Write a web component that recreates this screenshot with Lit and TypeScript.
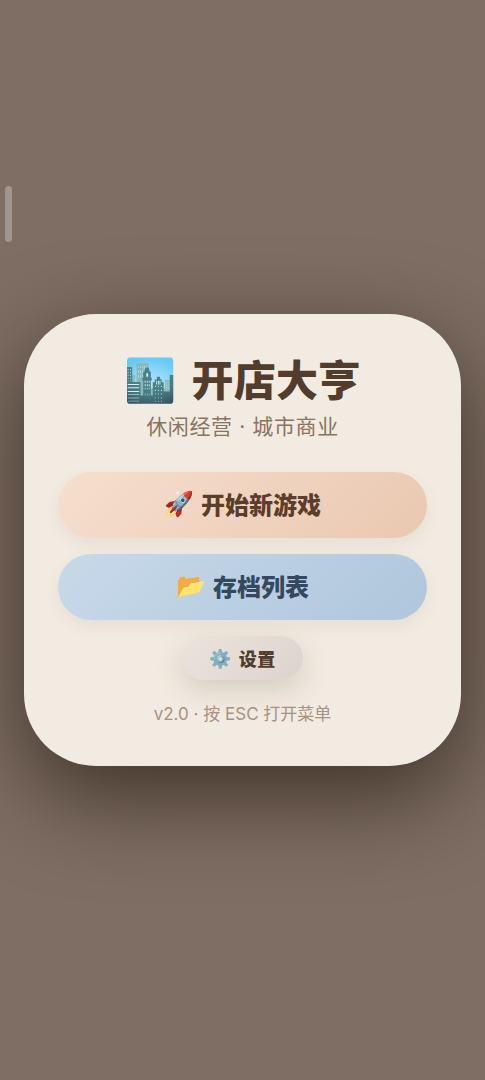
import { LitElement, html, css } from "lit";
import { customElement } from "lit/decorators.js";

@customElement("app-root")
export class AppRoot extends LitElement {
  static styles = css`
    :host {
      display: block;
      width: 485px;
      height: 1080px;
      font-family: Inter, "Noto Sans CJK SC", sans-serif;
    }
    .page {
      position: relative;
      width: 485px;
      height: 1080px;
      background: #7e6e63;
      display: flex;
      align-items: flex-start;
      justify-content: center;
      padding-top: 314px;
      box-sizing: border-box;
      overflow: hidden;
    }
    .scroll {
      position: absolute;
      left: 5px;
      top: 186px;
      width: 7px;
      height: 56px;
      border-radius: 4px;
      background: #a0968f;
    }
    .card {
      width: 437px;
      height: 452px;
      box-sizing: border-box;
      border-radius: 72px;
      background: #f2ebe1;
      box-shadow: 0 30px 90px rgba(35, 22, 12, 0.68);
      padding: 41px 34px 0;
      display: flex;
      flex-direction: column;
      align-items: center;
    }
    .head {
      display: flex;
      align-items: center;
      gap: 15px;
      height: 52px;
    }
    .title {
      font-size: 42px;
      line-height: 52px;
      font-weight: 900;
      letter-spacing: 0.3px;
      color: #523d2d;
    }
    .emoji-big {
      font-size: 42px;
      line-height: 48px;
      margin-top: -2px;
    }
    .sub {
      margin-top: 5px;
      font-size: 21px;
      line-height: 30px;
      color: #8a7362;
      letter-spacing: 0.6px;
    }
    .btn {
      display: flex;
      align-items: center;
      justify-content: center;
      gap: 7px;
      width: 369px;
      height: 66px;
      box-sizing: border-box;
      padding-bottom: 3px;
      border-radius: 33px;
      font-size: 24px;
      font-weight: 900;
    }
    .start {
      margin-top: 30px;
      background: linear-gradient(135deg, #f6dfcf, #eac8b0);
      color: #5a3e2b;
      box-shadow: 0 6px 16px rgba(120, 90, 60, 0.08);
    }
    .load {
      margin-top: 16px;
      background: linear-gradient(135deg, #c8d9e9, #afc6dc);
      color: #34495e;
      box-shadow: 0 6px 16px rgba(120, 90, 60, 0.08);
    }
    .set {
      margin-top: 16px;
      width: 121px;
      height: 44px;
      padding-bottom: 0;
      border-radius: 22px;
      background: linear-gradient(135deg, #ebe4dd, #dcd3cc);
      color: #523d2d;
      font-size: 18px;
      font-weight: 900;
      letter-spacing: 0.5px;
      gap: 7px;
      box-shadow: 0 10px 28px rgba(90, 70, 50, 0.18);
    }
    .ver {
      margin-top: 21px;
      font-size: 17px;
      line-height: 26px;
      color: #a8917f;
    }
  `;

  render() {
    return html`
      <div class="page">
        <div class="scroll"></div>
        <div class="card">
          <div class="head">
            <span class="emoji-big">🏙️</span>
            <span class="title">开店大亨</span>
          </div>
          <div class="sub">休闲经营 · 城市商业</div>
          <div class="btn start"><span>🚀</span><span>开始新游戏</span></div>
          <div class="btn load"><span>📂</span><span>存档列表</span></div>
          <div class="btn set"><span>⚙️</span><span>设置</span></div>
          <div class="ver">v2.0 · 按 ESC 打开菜单</div>
        </div>
      </div>
    `;
  }
}
